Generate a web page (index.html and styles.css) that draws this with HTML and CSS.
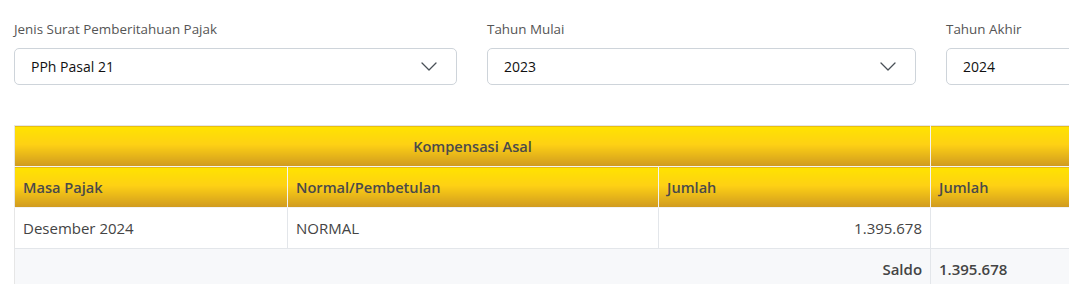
FILE: index.html
```html
<!DOCTYPE html>
<html lang="id">
<head>
  <meta charset="UTF-8" />
  <meta name="viewport" content="width=device-width, initial-scale=1.0"/>
  <title>Kompensasi</title>
  <link rel="stylesheet" href="styles.css">
</head>
<body>
  <!-- Filter -->
  <div class="filter-row">
    <div class="field">
      <label>Jenis Surat Pemberitahuan Pajak</label>
      <div class="select-box">
        <span>PPh Pasal 21</span>
        <svg class="chevron" width="16" height="9" viewBox="0 0 16 9"><path d="M1 1l7 7 7-7" fill="none" stroke="#495057" stroke-width="1.3" stroke-linecap="round" stroke-linejoin="round"/></svg>
      </div>
    </div>
    <div class="field">
      <label>Tahun Mulai</label>
      <div class="select-box">
        <span>2023</span>
        <svg class="chevron" width="16" height="9" viewBox="0 0 16 9"><path d="M1 1l7 7 7-7" fill="none" stroke="#495057" stroke-width="1.3" stroke-linecap="round" stroke-linejoin="round"/></svg>
      </div>
    </div>
    <div class="field">
      <label>Tahun Akhir</label>
      <div class="select-box">
        <span>2024</span>
      </div>
    </div>
  </div>

  <!-- Tabel -->
  <table class="komp-table">
    <colgroup>
      <col class="c1"><col class="c2"><col class="c3"><col class="c4">
    </colgroup>
    <thead>
      <tr><th colspan="3" class="center">Kompensasi Asal</th><th></th></tr>
      <tr><th>Masa Pajak</th><th>Normal/Pembetulan</th><th>Jumlah</th><th>Jumlah</th></tr>
    </thead>
    <tbody>
      <tr><td>Desember 2024</td><td>NORMAL</td><td class="num">1.395.678</td><td></td></tr>
      <tr class="saldo"><td colspan="3" class="num bold">Saldo</td><td class="bold">1.395.678</td></tr>
    </tbody>
  </table>
</body>
</html>
```

FILE: styles.css
```css
body {
  margin: 0;
  padding: 20px 14px 0;
  font-family: "Open Sans", "Noto Sans", Arial, sans-serif;
  color: #444;
  background-color: #fff;
  overflow: hidden;
}

/* Filter */
.filter-row {
  display: grid;
  grid-template-columns: 443px 429px 429px;
  gap: 30px;
  width: 1400px;
}
.field label {
  display: block;
  font-size: 13.4px;
  line-height: 18px;
  color: #555;
  margin-bottom: 10px;
}
.select-box {
  display: flex;
  align-items: center;
  justify-content: space-between;
  height: 35px;
  border: 1px solid #ced4da;
  border-radius: 5px;
  padding: 0 19px 0 16px;
  font-size: 14px;
  color: #111;
}
.chevron {
  display: block;
}

/* Tabel */
.komp-table {
  margin-top: 40px;
  border-collapse: collapse;
  table-layout: fixed;
  width: 1400px;
  font-size: 15px;
}
.c1 { width: 273px; }
.c2 { width: 371px; }
.c3 { width: 272px; }
.komp-table th,
.komp-table td {
  padding: 9px 8px;
  line-height: 22px;
  text-align: left;
  white-space: nowrap;
}
.komp-table th {
  background: linear-gradient(to bottom, #ffe300 0%, #fed114 45%, #cf9a20 100%);
  color: #4a4a4a;
  font-weight: 600;
  font-size: 14.6px;
  border: 1px solid #f3f3f3;
  border-top: none;
}
.komp-table thead tr:first-child th {
  border-top: 1px solid #e6e6e6;
}
.komp-table th:first-child,
.komp-table td:first-child {
  border-left: 1px solid #e6e6e6;
}
.komp-table td {
  border: 1px solid #e3e6ea;
  color: #444;
  background-color: #fff;
}
.komp-table .center { text-align: center; }
.komp-table .num { text-align: right; }
.komp-table .bold { font-weight: 600; }
.komp-table .saldo td {
  background-color: #f7f8fa;
}
```
